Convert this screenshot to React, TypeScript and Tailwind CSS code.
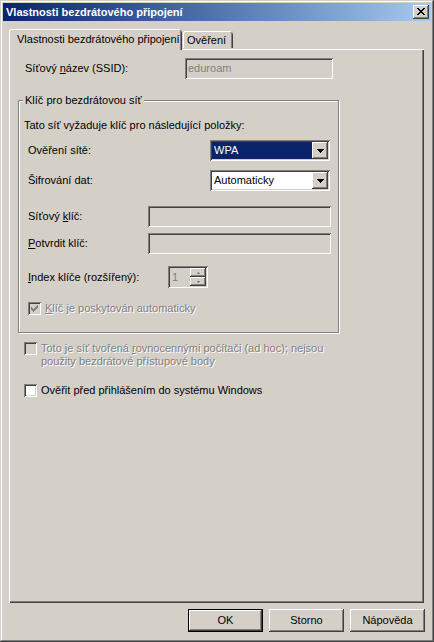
import React from "react"

const raised =
  "shadow-[inset_-1px_-1px_#404040,inset_1px_1px_#fff,inset_-2px_-2px_#808080,inset_2px_2px_#d4d0c8]"
const sunken =
  "shadow-[inset_1px_1px_#808080,inset_-1px_-1px_#fff,inset_2px_2px_#404040,inset_-2px_-2px_#d4d0c8]"
const disabledText = "text-[#808080] [text-shadow:1px_1px_0_#fff]"

const checkRows = ["......X", ".....XX", "X...XXX", "XX.XXX.", "XXXXX..", ".XXX...", "..X...."]
const closeRows = ["XX....XX", ".XX..XX.", "..XXXX..", "...XX...", "..XXXX..", ".XX..XX.", "XX....XX"]

function Bitmap({ rows, color }: { rows: string[]; color: string }) {
  return (
    <svg width={rows[0].length} height={rows.length} shapeRendering="crispEdges">
      {rows.map((row, y) =>
        row.split("").map((c, x) =>
          c === "X" ? <rect key={`${x}-${y}`} x={x} y={y} width={1} height={1} fill={color} /> : null
        )
      )}
    </svg>
  )
}

function Checkbox({ checked, disabled }: { checked?: boolean; disabled?: boolean }) {
  return (
    <div
      className={`w-[13px] h-[13px] shrink-0 flex items-center justify-center ${sunken} ${
        disabled ? "bg-[#d4d0c8]" : "bg-white"
      }`}
    >
      {checked && <Bitmap rows={checkRows} color={disabled ? "#808080" : "#000"} />}
    </div>
  )
}

function TextBox({ width, value }: { width: string; value?: string }) {
  return (
    <div className={`${width} h-[21px] bg-[#d4d0c8] ${sunken} flex items-center pl-[3px] text-[#808080]`}>
      {value}
    </div>
  )
}

function DropArrow() {
  return (
    <svg width="7" height="4" shapeRendering="crispEdges">
      <rect x="0" y="0" width="7" height="1" fill="#000" />
      <rect x="1" y="1" width="5" height="1" fill="#000" />
      <rect x="2" y="2" width="3" height="1" fill="#000" />
      <rect x="3" y="3" width="1" height="1" fill="#000" />
    </svg>
  )
}

function Select({ value, selected }: { value: string; selected?: boolean }) {
  return (
    <div className={`w-[120px] h-[21px] bg-white ${sunken} p-[2px] flex`}>
      <div
        className={`flex-1 flex items-center pl-[2px] ${selected ? "bg-[#0a246a] text-white" : ""}`}
      >
        {value}
      </div>
      <div className={`w-[16px] h-[17px] bg-[#d4d0c8] ${raised} flex items-center justify-center`}>
        <DropArrow />
      </div>
    </div>
  )
}

function SpinArrow({ up }: { up?: boolean }) {
  const rows = up ? ["..X..", ".XXX."] : [".XXX.", "..X.."]
  return (
    <div className="relative">
      <Bitmap rows={rows} color="#808080" />
    </div>
  )
}

function Spinner() {
  return (
    <div className={`w-[40px] h-[22px] bg-[#d4d0c8] ${sunken} p-[2px] flex`}>
      <div className="flex-1 flex items-center pl-[2px] text-[#808080]">1</div>
      <div className="w-[16px] flex flex-col">
        <div className={`h-[9px] ${raised} flex items-center justify-center`}>
          <SpinArrow up />
        </div>
        <div className={`h-[9px] ${raised} flex items-center justify-center`}>
          <SpinArrow />
        </div>
      </div>
    </div>
  )
}

function Button({ label, isDefault }: { label: string; isDefault?: boolean }) {
  return (
    <div className={`w-[75px] h-[23px] ${isDefault ? "border border-black" : ""}`}>
      <div className={`w-full h-full ${raised} flex items-center justify-center`}>{label}</div>
    </div>
  )
}

export default function App() {
  return (
    <div className="w-[434px] h-[642px] bg-[#d4d0c8] p-[3px] flex flex-col text-[11px] leading-[13px] text-black font-['Liberation_Sans',Arial,sans-serif] shadow-[inset_-1px_-1px_#404040,inset_1px_1px_#d4d0c8,inset_-2px_-2px_#808080,inset_2px_2px_#fff]">
      {/* title bar */}
      <div className="h-[18px] shrink-0 flex items-center bg-linear-to-r from-[#0a246a] to-[#a6caf0]">
        <span className="pl-[3px] font-bold text-white">Vlastnosti bezdrátového připojení</span>
        <div className={`ml-auto mr-[2px] w-[16px] h-[14px] bg-[#d4d0c8] ${raised} flex items-center justify-center pb-[1px]`}>
          <Bitmap rows={closeRows} color="#000" />
        </div>
      </div>

      <div className="flex flex-col pl-[6px] pt-[8px]">
        {/* tabs */}
        <div className="h-[20px] flex items-end relative z-10">
          <div className="w-[173px] h-[21px] -mb-[1px] bg-[#d4d0c8] rounded-t-[3px] pl-[8px] pt-[4px] shadow-[inset_1px_0_#fff,inset_0_1px_#fff,inset_-1px_0_#404040,inset_-2px_0_#808080]">
            Vlastnosti bezdrátového připojení
          </div>
          <div className="w-[50px] h-[17px] ml-[1px] mb-[1px] bg-[#d4d0c8] rounded-t-[3px] pl-[4px] pt-[3px] shadow-[inset_1px_0_#fff,inset_0_1px_#fff,inset_-1px_0_#404040,inset_-2px_0_#808080]">
            Ověření
          </div>
        </div>

        {/* tab panel */}
        <div className="w-[415px] h-[554px] flex flex-col shadow-[inset_1px_1px_#fff,inset_-1px_-1px_#404040,inset_-2px_-2px_#808080]">
          <div className="mt-[9px] ml-[16px] flex items-center">
            <span className="w-[160px]">
              Síťový <u>n</u>ázev (SSID):
            </span>
            <TextBox width="w-[148px]" value="eduroam" />
          </div>

          {/* group box */}
          <div className="mt-[21px] ml-[9px] w-[321px] h-[233px] border border-[#808080] shadow-[inset_1px_1px_#fff,1px_1px_#fff] flex flex-col">
            <div className="-mt-[7px] ml-[4px] px-[2px] w-fit bg-[#d4d0c8]">Klíč pro bezdrátovou síť</div>
            <div className="mt-[12px] ml-[5px]">Tato síť vyžaduje klíč pro následující položky:</div>

            <div className="ml-[9px] flex flex-col">
              <div className="mt-[8px] flex items-center">
                <span className="w-[182px]">Ověření sítě:</span>
                <Select value="WPA" selected />
              </div>
              <div className="mt-[9px] flex items-center">
                <span className="w-[182px]">Šifrování dat:</span>
                <Select value="Automaticky" />
              </div>
              <div className="mt-[15px] flex items-center">
                <span className="w-[120px]">
                  Síťový <u>k</u>líč:
                </span>
                <TextBox width="w-[183px]" />
              </div>
              <div className="mt-[6px] flex items-center">
                <span className="w-[120px]">
                  <u>P</u>otvrdit klíč:
                </span>
                <TextBox width="w-[183px]" />
              </div>
              <div className="mt-[12px] flex items-center">
                <span className="w-[140px]">
                  <u>I</u>ndex klíče (rozšířený):
                </span>
                <Spinner />
              </div>
              <div className="mt-[14px] flex items-center gap-[4px]">
                <Checkbox checked disabled />
                <span className={disabledText}>
                  <u>K</u>líč je poskytován automaticky
                </span>
              </div>
            </div>
          </div>

          <div className="mt-[9px] ml-[15px] flex items-start gap-[4px]">
            <Checkbox disabled />
            <span className={`${disabledText} whitespace-nowrap`}>
              Toto je síť tvořená <u>r</u>ovnocennými počítači (ad hoc); nejsou
              <br />
              použity bezdrátové přístupové body
            </span>
          </div>

          <div className="mt-[16px] ml-[15px] flex items-center gap-[4px]">
            <Checkbox />
            <span>Ověřit před přihlášením do systému Windows</span>
          </div>
        </div>

        {/* buttons */}
        <div className="mt-[6px] w-[416px] flex justify-end gap-[6px]">
          <Button label="OK" isDefault />
          <Button label="Storno" />
          <Button label="Nápověda" />
        </div>
      </div>
    </div>
  )
}
